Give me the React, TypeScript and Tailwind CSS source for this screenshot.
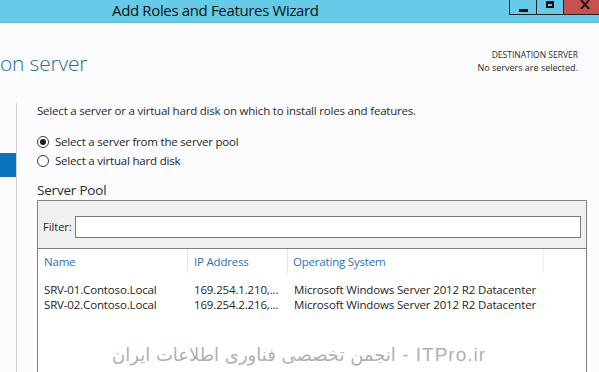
import React from "react";

const ui = { fontFamily: '"Open Sans", "Noto Sans", sans-serif' };

const Radio: React.FC<{ checked?: boolean; label: string }> = ({ checked, label }) => (
  <div className="flex items-center h-[19px]">
    <span className="w-[12px] h-[12px] rounded-full border border-[#3a3a3a] bg-white flex items-center justify-center">
      {checked && <span className="w-[6px] h-[6px] rounded-full bg-[#1a1a1a]" />}
    </span>
    <span className="ml-[6px] text-[11.5px] text-[#1e1e1e] tracking-[-0.2px]">{label}</span>
  </div>
);

const servers = [
  { name: "SRV-01.Contoso.Local", ip: "169.254.1.210,...", os: "Microsoft Windows Server 2012 R2 Datacenter" },
  { name: "SRV-02.Contoso.Local", ip: "169.254.2.216,...", os: "Microsoft Windows Server 2012 R2 Datacenter" },
];

export default function App() {
  return (
    <div className="relative w-[599px] h-[372px] overflow-hidden bg-[#fcfcfe]" style={ui}>
      {/* title bar */}
      <div className="relative h-[23px] bg-[#66cbe8] border-b border-[#5fbcd8] flex items-start">
        <div className="pl-[112px] pt-[1px] text-[15px] leading-[19px] text-[#111] tracking-[-0.35px]">
          Add Roles and Features Wizard
        </div>
        <div className="absolute right-0 top-0 flex h-[15px]">
          <div className="w-[28px] border border-[#222] border-t-0 bg-[#66cbe8] flex items-end justify-center pb-[2px]">
            <span className="w-[9px] h-[3px] bg-[#111]" />
          </div>
          <div className="w-[26px] border-b border-[#222] bg-[#66cbe8] flex justify-center pt-[1px]">
            <span className="w-[8px] h-[7px] border-[2px] border-t-[3px] border-[#111]" />
          </div>
          <div className="w-[36px] border-l border-b border-[#222] bg-[#c75050] flex justify-center">
            <svg width="10" height="9" viewBox="0 0 10 9" className="ml-[6px]">
              <path d="M1 0 L9 9 M9 0 L1 9" stroke="#1a1a1a" strokeWidth="2" />
            </svg>
          </div>
        </div>
      </div>

      {/* header */}
      <div className="flex justify-between h-[77px]">
        <div className="pt-[26px] text-[21px] font-light text-[#2b6d8c] leading-[28px] tracking-[-0.2px]">
          on server
        </div>
        <div className="pt-[26px] pr-[21px] text-right text-[#2a2a2a] leading-[12px]">
          <div className="text-[8.5px]">DESTINATION SERVER</div>
          <div className="text-[9px] mt-[1px]">No servers are selected.</div>
        </div>
      </div>

      {/* body */}
      <div className="flex h-[272px]">
        <div className="w-[17px] border-r border-[#d2d2d4] pt-[50px] mt-[3px]">
          <div className="w-[16px] h-[24px] bg-[#0a73bd]" />
        </div>
        <div className="flex-1 pl-[20px] pr-[12px]">
          <div className="pt-[3px] text-[11.5px] text-[#2a2a2a] leading-[16px] tracking-[-0.2px]">
            Select a server or a virtual hard disk on which to install roles and features.
          </div>
          <div className="mt-[13px] flex flex-col">
            <Radio checked label="Select a server from the server pool" />
            <Radio label="Select a virtual hard disk" />
          </div>
          <div className="mt-[11px] text-[13.5px] text-[#2a2a2a] leading-[18px] tracking-[-0.2px]">Server Pool</div>

          <div className="mt-[1px] border border-[#828282] bg-[#f0f0f0]">
            <div className="flex items-center px-[5px] pt-[15px] pb-[10px]">
              <span className="text-[11px] text-[#1e1e1e] mr-[3px]">Filter:</span>
              <div className="flex-1 h-[22px] bg-white border border-[#7a7a7a]" />
            </div>
            <div className="border-t border-[#7e7e7e] bg-white h-[140px]">
              <div className="flex h-[24px] text-[11.5px] text-[#2a73b5] tracking-[-0.2px]">
                <div className="w-[150px] pl-[6px] pt-[4px] border-r border-[#e4e4e4]">Name</div>
                <div className="w-[100px] pl-[6px] pt-[4px] border-r border-[#e4e4e4]">IP Address</div>
                <div className="w-[256px] pl-[5px] pt-[4px] border-r border-[#eeeeee]">Operating System</div>
              </div>
              <div className="pt-[9px]">
                {servers.map((s) => (
                  <div key={s.name} className="flex h-[15px] text-[11.5px] leading-[15px] text-[#1e1e1e] tracking-[-0.15px]">
                    <div className="w-[150px] pl-[6px]">{s.name}</div>
                    <div className="w-[100px] pl-[6px]">{s.ip}</div>
                    <div className="pl-[6px]">{s.os}</div>
                  </div>
                ))}
              </div>
            </div>
          </div>
        </div>
      </div>

      {/* watermark */}
      <div
        className="absolute left-[112px] top-[341px] text-[#b0b0b0] whitespace-nowrap flex items-baseline"
        style={{ textShadow: "1px 1px 0 #ffffff" }}
      >
        <span className="text-[18px]" style={{ fontFamily: '"DejaVu Sans", sans-serif' }}>
          انجمن تخصصی فناوری اطلاعات ایران
        </span>
        <span className="text-[19px] tracking-[1px]" style={{ fontFamily: '"Liberation Sans", sans-serif' }}>
          &nbsp;- ITPro.ir
        </span>
      </div>
    </div>
  );
}
